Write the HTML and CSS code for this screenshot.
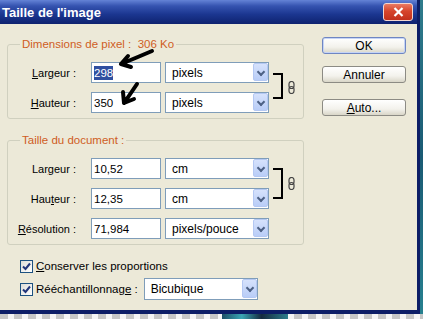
FILE: index.html
```html
<!DOCTYPE html>
<html lang="fr">
<head>
  <meta charset="UTF-8">
  <title>Taille de l'image</title>
  <link rel="stylesheet" href="styles.css">
</head>
<body>
  <div class="screen">
    <div class="window">
      <div class="titlebar">
        <span class="title">Taille de l'image</span>
        <span class="close">
          <svg width="11" height="10" viewBox="0 0 11 10"><path d="M1.5 1 L9.5 9 M9.5 1 L1.5 9" stroke="#fff" stroke-width="2.2"/></svg>
        </span>
      </div>
      <div class="dialog">
        <div class="main">
          <fieldset class="group">
            <legend>Dimensions de pixel :&nbsp; 306 Ko</legend>
            <div class="rows">
              <label class="lbl"><u>L</u>argeur :</label>
              <div class="field"><span class="selected">298</span></div>
              <div class="combo">pixels<span class="drop"></span></div>
              <div class="link">
                <span class="bracket short"></span>
                <svg class="chain" width="7" height="13" viewBox="0 0 7 13"><rect x="1" y="0.5" width="5" height="7" rx="2.5" fill="none" stroke="#444" stroke-width="1.2"/><rect x="1" y="5.5" width="5" height="7" rx="2.5" fill="none" stroke="#444" stroke-width="1.2"/></svg>
              </div>
              <label class="lbl"><u>H</u>auteur :</label>
              <div class="field">350</div>
              <div class="combo">pixels<span class="drop"></span></div>
            </div>
          </fieldset>

          <fieldset class="group second">
            <legend>Taille du document :</legend>
            <div class="rows">
              <label class="lbl">Lar<u>g</u>eur :</label>
              <div class="field">10,52</div>
              <div class="combo">cm<span class="drop"></span></div>
              <div class="link">
                <span class="bracket"></span>
                <svg class="chain" width="7" height="13" viewBox="0 0 7 13"><rect x="1" y="0.5" width="5" height="7" rx="2.5" fill="none" stroke="#444" stroke-width="1.2"/><rect x="1" y="5.5" width="5" height="7" rx="2.5" fill="none" stroke="#444" stroke-width="1.2"/></svg>
              </div>
              <label class="lbl">Hau<u>t</u>eur :</label>
              <div class="field">12,35</div>
              <div class="combo">cm<span class="drop"></span></div>
              <label class="lbl"><u>R</u>ésolution :</label>
              <div class="field">71,984</div>
              <div class="combo">pixels/pouce<span class="drop"></span></div>
            </div>
          </fieldset>

          <div class="check-row">
            <span class="checkbox"><svg width="9" height="9" viewBox="0 0 9 9"><path d="M1 4.5 L3.5 7 L8 1.5" fill="none" stroke="#21357a" stroke-width="2"/></svg></span>
            <span><u>C</u>onserver les proportions</span>
          </div>
          <div class="check-row resample">
            <span class="checkbox"><svg width="9" height="9" viewBox="0 0 9 9"><path d="M1 4.5 L3.5 7 L8 1.5" fill="none" stroke="#21357a" stroke-width="2"/></svg></span>
            <span>Rééchantillonnag<u>e</u> :</span>
            <div class="combo wide">Bicubique<span class="drop"></span></div>
          </div>
        </div>

        <div class="buttons">
          <button class="btn default">OK</button>
          <button class="btn">Annuler</button>
          <button class="btn auto"><u>A</u>uto...</button>
        </div>
      </div>
    </div>
    <div class="side"></div>
    <div class="floor"><span class="photo"></span></div>
  </div>

  <svg class="marks" width="423" height="319" viewBox="0 0 423 319">
    <path d="M152 51 Q138 57 121 64 M121 64 L128 56 M121 64 L131 67" />
    <path d="M137 84 Q131 93 124 103 M124 103 L123 92 M124 103 L134 99" />
  </svg>
</body>
</html>
```

FILE: styles.css
```css
* {
  box-sizing: border-box;
}

body {
  margin: 0;
  width: 423px;
  height: 319px;
  overflow: hidden;
  position: relative;
  font-family: 'Liberation Sans', Arial, sans-serif;
  font-size: 11px;
  color: #000;
}

.screen {
  display: grid;
  grid-template-columns: 420px 3px;
  grid-template-rows: 314px 5px;
}

.window {
  display: flex;
  flex-direction: column;
  border-right: 3px solid #0c1d66;
  border-bottom: 4px solid #0c1d66;
}

.titlebar {
  height: 24px;
  display: flex;
  align-items: center;
  justify-content: space-between;
  padding: 0 4px 0 2px;
  background: linear-gradient(180deg, #6483d6 0%, #3553b0 25%, #1b3690 60%, #0e226f 100%);
}

.title {
  color: #fff;
  font-weight: bold;
  font-size: 13px;
}

.close {
  width: 30px;
  height: 18px;
  display: flex;
  align-items: center;
  justify-content: center;
  border: 1px solid #f3d6cf;
  border-radius: 3px;
  background: linear-gradient(180deg, #ea7a62 0%, #d6452c 45%, #c2301c 100%);
}

.dialog {
  flex: 1;
  display: flex;
  background: #ece9d8;
}

.main {
  width: 304px;
  padding: 14px 0 0 7px;
}

.group {
  margin: 0;
  padding: 11px 0 5px;
  border: 1px solid #d0d0bf;
  border-radius: 3px;
  width: 297px;
}

.group.second {
  margin-top: 15px;
}

.group legend {
  margin-left: 12px;
  padding: 0 2px;
  line-height: 13px;
  font-size: 11.5px;
  color: #cf5d24;
}

.rows {
  display: grid;
  grid-template-columns: 79px 70px 104px 1fr;
  grid-auto-rows: 21px;
  column-gap: 4px;
  row-gap: 9px;
}

.lbl {
  text-align: right;
  padding-right: 11px;
  align-self: center;
}

.field {
  border: 1px solid #7f9db9;
  background: #fff;
  padding-left: 2px;
  display: flex;
  align-items: center;
  font-size: 11.5px;
}

.selected {
  background: #2f4fa0;
  color: #fff;
  padding: 1px 0;
}

.combo {
  border: 1px solid #7f9db9;
  background: #fff;
  padding-left: 6px;
  display: flex;
  align-items: center;
  justify-content: space-between;
  font-size: 12px;
}

.drop {
  width: 15px;
  align-self: stretch;
  margin: 0 0 1px;
  border: 1px solid #b4c8f3;
  border-radius: 2px;
  background: linear-gradient(180deg, #d6e2fc 0%, #b9cdf7 100%);
  position: relative;
}

.drop::after {
  content: '';
  position: absolute;
  left: 4px;
  top: 5px;
  width: 4px;
  height: 4px;
  border-right: 2px solid #4d6185;
  border-bottom: 2px solid #4d6185;
  transform: rotate(45deg);
}

.link {
  grid-column: 4;
  grid-row: 1 / span 2;
  display: flex;
  align-items: center;
  gap: 5px;
}

.bracket {
  width: 10px;
  height: 31px;
  border: 2px solid #000;
  border-left: none;
}

.bracket.short {
  height: 26px;
  margin-top: -4px;
}

.chain {
  display: block;
}

.check-row {
  display: flex;
  align-items: center;
  gap: 3px;
  margin: 13px 0 0 13px;
  height: 16px;
  font-size: 11.5px;
}

.check-row.resample {
  margin-top: 4px;
  height: 22px;
}

.checkbox {
  width: 13px;
  height: 13px;
  border: 1px solid #1c5180;
  background: linear-gradient(135deg, #dcdcd7 0%, #fff 100%);
  display: flex;
  align-items: center;
  justify-content: center;
}

.combo.wide {
  width: 114px;
  height: 22px;
  margin-left: 3px;
}

.buttons {
  display: flex;
  flex-direction: column;
  padding: 13px 0 0 18px;
}

.btn {
  width: 84px;
  height: 17px;
  padding: 0;
  font-family: inherit;
  font-size: 12px;
  color: #000;
  border: 1px solid #8c8b84;
  border-radius: 3px;
  background: linear-gradient(180deg, #fff 0%, #f3f2ec 60%, #d9d6c8 100%);
}

.btn.default {
  border-color: #6f86c2;
  box-shadow: inset 0 0 0 1px #c5d4f6;
}

.btn + .btn {
  margin-top: 12px;
}

.btn.auto {
  margin-top: 16px;
}

.side {
  background: linear-gradient(180deg, #2f7c8c 0%, #1a5b74 50%, #27808f 100%);
}

.floor {
  grid-column: 1 / span 2;
  position: relative;
  background: repeating-linear-gradient(90deg, #c6c6c6 0 8px, #f4f4f4 8px 14px);
}

.photo {
  position: absolute;
  left: 222px;
  top: 0;
  width: 66px;
  height: 5px;
  background: linear-gradient(90deg, #1c4e66, #3aa6b4 30%, #142a3f 60%, #2d7d8c);
}

.marks {
  position: absolute;
  left: 0;
  top: 0;
  fill: none;
  stroke: #000;
  stroke-width: 4;
  stroke-linecap: round;
  stroke-linejoin: round;
}
```
